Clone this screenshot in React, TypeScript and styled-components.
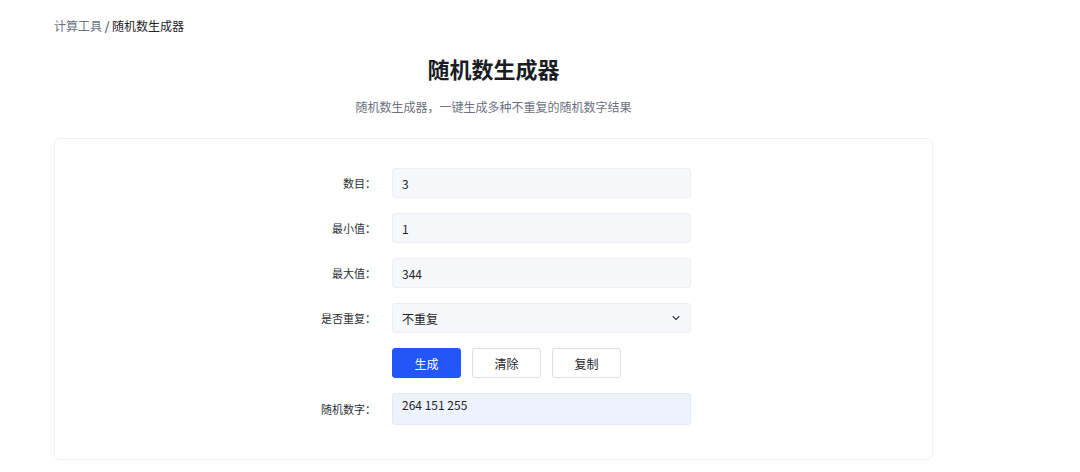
import React from "react";
import styled, { createGlobalStyle } from "styled-components";

const Global = createGlobalStyle`
  html, body { margin: 0; padding: 0; background: #ffffff; }
  body { font-family: "Noto Sans CJK SC", "Noto Sans", "Liberation Sans", sans-serif; color: #1f2329; }
  * { box-sizing: border-box; }
`;

const Page = styled.div`
  width: 1080px;
  height: 472px;
  padding: 17px 0 0 54px;
  overflow: hidden;
`;

const Breadcrumb = styled.div`
  font-size: 12px;
  line-height: 18px;
  color: #1f2329;
`;

const Crumb = styled.span<{ $muted?: boolean }>`
  color: ${(p) => (p.$muted ? "#6b7180" : "#1f2329")};
`;

const Column = styled.div`
  width: 879px;
`;

const Title = styled.h1`
  margin: 17px 0 0;
  text-align: center;
  font-size: 22px;
  line-height: 32px;
  font-weight: 700;
  color: #1a1d24;
`;

const Subtitle = styled.p`
  margin: 14px 0 0;
  text-align: center;
  font-size: 12px;
  line-height: 18px;
  color: #6b7180;
`;

const Card = styled.div`
  margin-top: 22px;
  border: 1px solid #f0f1f3;
  border-radius: 6px;
  padding: 29px 0 34px;
  display: flex;
  justify-content: center;
`;

const Form = styled.div`
  display: flex;
  flex-direction: column;
  gap: 15px;
  width: 400px;
  margin-left: -3px;
`;

const Row = styled.div`
  display: grid;
  grid-template-columns: 84px 299px;
  column-gap: 16px;
  align-items: center;
`;

const Label = styled.label`
  text-align: right;
  font-size: 11px;
  color: #2b2f36;
`;

const Field = styled.div<{ $result?: boolean }>`
  height: ${(p) => (p.$result ? "32px" : "30px")};
  border: 1px solid ${(p) => (p.$result ? "#e2e8f8" : "#eceef2")};
  background: ${(p) => (p.$result ? "#eef2fd" : "#f5f7fa")};
  border-radius: 3px;
  padding: ${(p) => (p.$result ? "2px 9px 0" : "0 9px")};
  display: flex;
  align-items: ${(p) => (p.$result ? "flex-start" : "center")};
  justify-content: space-between;
  font-size: 12px;
  color: #1f2329;
`;

const Buttons = styled.div`
  display: flex;
  gap: 11px;
`;

const Button = styled.button<{ $primary?: boolean }>`
  width: 69px;
  height: 30px;
  border-radius: 3px;
  border: 1px solid ${(p) => (p.$primary ? "#2356f6" : "#dcdfe6")};
  background: ${(p) => (p.$primary ? "#2356f6" : "#ffffff")};
  color: ${(p) => (p.$primary ? "#ffffff" : "#1f2329")};
  font-family: inherit;
  font-size: 12px;
  padding: 0;
  cursor: pointer;
`;

const Chevron = () => (
  <svg width="12" height="12" viewBox="0 0 24 24" fill="none" stroke="#3d414a" strokeWidth="2.2" strokeLinecap="round" strokeLinejoin="round" style={{ marginRight: -1 }}>
    <path d="M6 9l6 6 6-6" />
  </svg>
);

export default function App() {
  return (
    <>
      <Global />
      <Page>
        <Breadcrumb>
          <Crumb $muted>计算工具</Crumb> / <Crumb>随机数生成器</Crumb>
        </Breadcrumb>
        <Column>
          <Title>随机数生成器</Title>
          <Subtitle>随机数生成器，一键生成多种不重复的随机数字结果</Subtitle>
          <Card>
            <Form>
              <Row>
                <Label>数目：</Label>
                <Field>3</Field>
              </Row>
              <Row>
                <Label>最小值：</Label>
                <Field>1</Field>
              </Row>
              <Row>
                <Label>最大值：</Label>
                <Field>344</Field>
              </Row>
              <Row>
                <Label>是否重复：</Label>
                <Field>
                  <span>不重复</span>
                  <Chevron />
                </Field>
              </Row>
              <Row>
                <span />
                <Buttons>
                  <Button $primary>生成</Button>
                  <Button>清除</Button>
                  <Button>复制</Button>
                </Buttons>
              </Row>
              <Row>
                <Label>随机数字：</Label>
                <Field $result>264 151 255</Field>
              </Row>
            </Form>
          </Card>
        </Column>
      </Page>
    </>
  );
}
